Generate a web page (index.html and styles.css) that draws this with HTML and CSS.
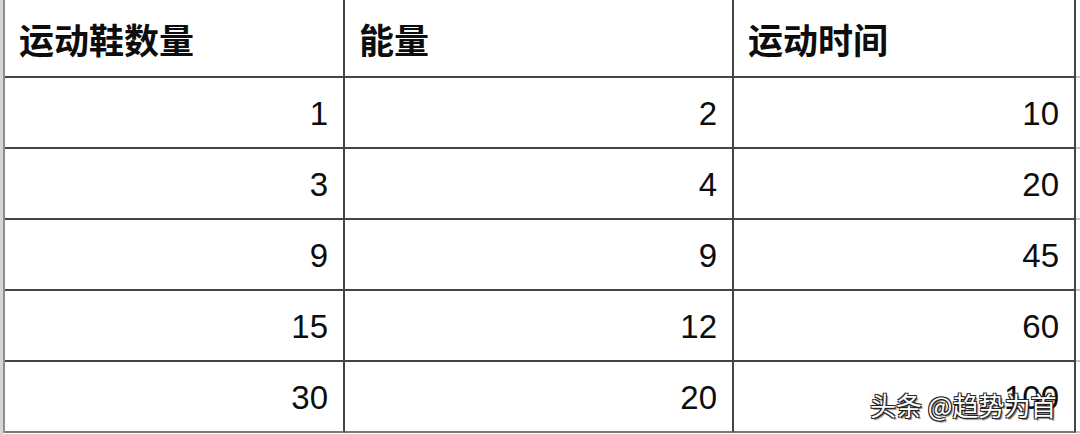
FILE: index.html
```html
<!DOCTYPE html>
<html lang="zh-CN">
<head>
<meta charset="utf-8">
<title>运动鞋数量</title>
<link rel="stylesheet" href="styles.css">
</head>
<body>
<div class="frame">
  <div class="sheet">
    <div class="cell head">运动鞋数量</div>
    <div class="cell head">能量</div>
    <div class="cell head">运动时间</div>
    <div class="cell gap head-gap"></div>

    <div class="cell num">1</div>
    <div class="cell num">2</div>
    <div class="cell num">10</div>
    <div class="cell gap"></div>

    <div class="cell num">3</div>
    <div class="cell num">4</div>
    <div class="cell num">20</div>
    <div class="cell gap"></div>

    <div class="cell num">9</div>
    <div class="cell num">9</div>
    <div class="cell num">45</div>
    <div class="cell gap"></div>

    <div class="cell num">15</div>
    <div class="cell num">12</div>
    <div class="cell num">60</div>
    <div class="cell gap"></div>

    <div class="cell num last">30</div>
    <div class="cell num last">20</div>
    <div class="cell num last">100</div>
    <div class="cell gap last"></div>
  </div>
  <div class="watermark">头条 @趋势为首</div>
</div>
</body>
</html>
```

FILE: styles.css
```css
html, body {
  margin: 0;
  padding: 0;
  background: #ffffff;
}

body {
  width: 1080px;
  height: 434px;
  overflow: hidden;
}

.frame {
  position: relative;
  border-left: 3px solid #d6d6d6;
  height: 434px;
  box-sizing: border-box;
}

.sheet {
  display: grid;
  grid-template-columns: 340px 389px 342px 1fr;
  grid-template-rows: 78px repeat(5, 71px);
  border-left: 2px solid #8e8e8e;
}

.cell {
  box-sizing: border-box;
  border-right: 2px solid #444444;
  border-bottom: 2px solid #444444;
  display: flex;
  align-items: center;
  color: #0d0d0d;
}

.cell.last {
  border-bottom-color: #7a7a7a;
}

.gap {
  border-right: none;
  border-bottom-color: #c4c4c4;
}

.gap.last {
  border-bottom-color: #c4c4c4;
}

.head {
  padding: 0 14px;
  font-family: "Noto Sans CJK SC", "Noto Sans", sans-serif;
  font-weight: 700;
  font-size: 35px;
}

.num {
  justify-content: flex-end;
  padding: 3px 15px 0 15px;
  font-family: "Liberation Sans", Arial, sans-serif;
  font-size: 33px;
}

.watermark {
  position: absolute;
  left: 867px;
  top: 388px;
  font-family: "Noto Sans CJK SC", sans-serif;
  font-size: 26px;
  line-height: 34px;
  color: #ffffff;
  white-space: nowrap;
  text-shadow:
    1px 1px 0 #222,
    -1px -1px 0 #222,
    1px -1px 0 #222,
    -1px 1px 0 #222,
    2px 2px 1px rgba(0,0,0,0.5);
}
```
